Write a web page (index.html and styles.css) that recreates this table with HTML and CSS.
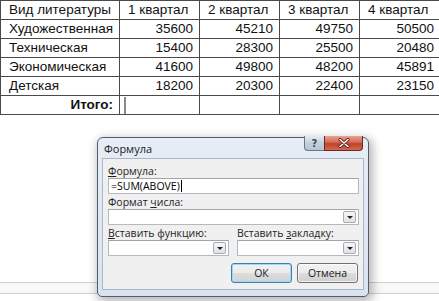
FILE: index.html
```html
<!DOCTYPE html>
<html lang="ru">
<head>
<meta charset="utf-8">
<link rel="stylesheet" href="styles.css">
</head>
<body>
<div class="page">
  <table class="lit">
    <colgroup>
      <col class="c1"><col class="c2"><col class="c2"><col class="c2"><col class="c5">
    </colgroup>
    <tr><td>Вид литературы</td><td>1 квартал</td><td>2 квартал</td><td>3 квартал</td><td>4 квартал</td></tr>
    <tr><td>Художественная</td><td class="num">35600</td><td class="num">45210</td><td class="num">49750</td><td class="num">50500</td></tr>
    <tr><td>Техническая</td><td class="num">15400</td><td class="num">28300</td><td class="num">25500</td><td class="num">20480</td></tr>
    <tr><td>Экономическая</td><td class="num">41600</td><td class="num">49800</td><td class="num">48200</td><td class="num">45891</td></tr>
    <tr><td>Детская</td><td class="num">18200</td><td class="num">20300</td><td class="num">22400</td><td class="num">23150</td></tr>
    <tr><td class="total">Итого:</td><td class="cur"><span class="caret"></span></td><td></td><td></td><td></td></tr>
  </table>
  <div class="hscroll"></div>
</div>

<div class="dialog">
  <div class="titlebar">
    <span class="title">Формула</span>
    <div class="capbtns">
      <span class="cap help">?</span>
      <span class="cap close">
        <svg width="12" height="10" viewBox="0 0 12 10"><path d="M2 1.5 L10 8.5 M10 1.5 L2 8.5" stroke="#5a1a1a" stroke-width="3.2" stroke-linecap="round"/><path d="M2 1.5 L10 8.5 M10 1.5 L2 8.5" stroke="#fff" stroke-width="1.6" stroke-linecap="round"/></svg>
      </span>
    </div>
  </div>
  <div class="client">
    <div class="field">
      <label class="lbl"><u>Ф</u>ормула:</label>
      <div class="box input">=SUM(ABOVE)<span class="tcaret"></span></div>
    </div>
    <div class="field">
      <label class="lbl">Формат <u>ч</u>исла:</label>
      <div class="box select"><span class="arrow"></span></div>
    </div>
    <div class="row2">
      <div class="field">
        <label class="lbl"><u>В</u>ставить функцию:</label>
        <div class="box select"><span class="arrow"></span></div>
      </div>
      <div class="field">
        <label class="lbl">Вставить <u>з</u>акладку:</label>
        <div class="box select"><span class="arrow"></span></div>
      </div>
    </div>
    <div class="buttons">
      <span class="btn default">ОК</span>
      <span class="btn">Отмена</span>
    </div>
  </div>
</div>
</body>
</html>
```
FILE: styles.css
```css
html, body {
  margin: 0;
  padding: 0;
  background: #fff;
}
body {
  width: 439px;
  height: 301px;
  overflow: hidden;
  position: relative;
}
.page {
  display: flex;
  flex-direction: column;
}
.lit {
  border-collapse: collapse;
  width: 440px;
  table-layout: fixed;
  font-family: "Liberation Sans", Arial, sans-serif;
  font-size: 13.5px;
  color: #111;
}
.c1 { width: 119px; }
.c2 { width: 80px; }
.c5 { width: 81px; }
.lit td {
  border: 1px solid #4a4a4a;
  height: 18px;
  line-height: 18px;
  padding: 0 6px 0 8px;
  white-space: nowrap;
  overflow: hidden;
}
.lit td.num { text-align: right; }
.lit td.total { text-align: right; font-weight: bold; }
.lit td.cur { padding-left: 4px; }
.caret {
  display: inline-block;
  width: 2px;
  height: 17px;
  background: #8a8a8a;
  vertical-align: middle;
}
.hscroll {
  margin-top: 167px;
  height: 10px;
  border-top: 1px solid #cfcfcf;
  border-bottom: 1px solid #cfcfcf;
  background: #f8f8f8;
}

/* dialog */
.dialog {
  position: absolute;
  left: 97px;
  top: 137px;
  width: 272px;
  height: 160px;
  box-sizing: border-box;
  border: 1px solid #505d6c;
  border-radius: 6px 6px 5px 5px;
  background: linear-gradient(#e6edf6, #d9e3ef);
  box-shadow: 2px 3px 10px 2px rgba(0,0,0,0.28);
  padding: 0 4px 6px 4px;
  display: flex;
  flex-direction: column;
  font-family: "Open Sans", "Noto Sans", sans-serif;
  font-size: 10.5px;
  color: #1a1a1a;
}
.titlebar {
  height: 20px;
  display: flex;
  align-items: flex-start;
  justify-content: space-between;
}
.title {
  margin-top: 3px;
  padding-left: 2px;
  font-size: 11px;
  color: #222;
}
.capbtns {
  display: flex;
  margin-top: -2px;
  margin-right: 1px;
  height: 16px;
}
.cap {
  display: flex;
  align-items: center;
  justify-content: center;
  height: 15px;
  box-sizing: border-box;
  border: 1px solid #6b7787;
  border-top: none;
}
.help {
  width: 20px;
  border-radius: 0 0 0 4px;
  border-right: none;
  background: linear-gradient(#e4eaf1, #c4cfdc 50%, #b7c4d3);
  color: #3b4a5e;
  font-family: "DejaVu Sans", sans-serif;
  font-size: 10px;
  font-weight: bold;
}
.close {
  width: 39px;
  border-radius: 0 0 4px 0;
  border-color: #6a2a22;
  background: linear-gradient(#e8a493, #d26a55 45%, #c1402a 55%, #d06a4e);
}
.client {
  flex: 1;
  background: #f0f0f0;
  border: 1px solid #a9b7c8;
  padding: 6px 4px 0 5px;
  display: flex;
  flex-direction: column;
  gap: 2px;
}
.field {
  display: flex;
  flex-direction: column;
}
.lbl {
  height: 13px;
  line-height: 13px;
  color: #1e1e1e;
}
.box {
  height: 16px;
  box-sizing: border-box;
  background: #fff;
  border: 1px solid #b4b8bf;
  border-top-color: #a0a4ab;
  position: relative;
}
.input {
  line-height: 14px;
  padding-left: 2px;
  font-size: 10.5px;
  color: #000;
  display: flex;
  align-items: center;
}
.tcaret {
  display: inline-block;
  width: 1px;
  height: 12px;
  background: #000;
  margin-left: 1px;
}
.select .arrow {
  position: absolute;
  right: 2px;
  top: 1px;
  width: 13px;
  height: 12px;
  box-sizing: border-box;
  border: 1px solid #a7abb2;
  border-radius: 2px;
  background: linear-gradient(#f7f7f7, #e2e2e2);
}
.select .arrow::after {
  content: "";
  position: absolute;
  left: 3px;
  top: 4px;
  border-left: 3px solid transparent;
  border-right: 3px solid transparent;
  border-top: 3px solid #222;
}
.row2 {
  display: grid;
  grid-template-columns: 121px 122px;
  column-gap: 8px;
}
.buttons {
  display: flex;
  justify-content: flex-end;
  gap: 5px;
  margin-top: 5px;
  padding-right: 1px;
}
.btn {
  width: 61px;
  height: 20px;
  box-sizing: border-box;
  border: 1px solid #707070;
  border-radius: 3px;
  background: linear-gradient(#f3f3f3, #ebebeb 50%, #dddddd 50%, #cfcfcf);
  display: flex;
  align-items: center;
  justify-content: center;
  color: #1a1a1a;
  box-shadow: inset 0 0 0 1px rgba(255,255,255,0.7);
}
.btn.default {
  border-color: #3c7fb1;
  box-shadow: inset 0 0 0 1px #9fd8f5;
  background: linear-gradient(#f2f2f2, #ebebeb 50%, #dddddd 50%, #d3d3d3);
}
u { text-decoration: underline; text-underline-offset: 1px; }
```
